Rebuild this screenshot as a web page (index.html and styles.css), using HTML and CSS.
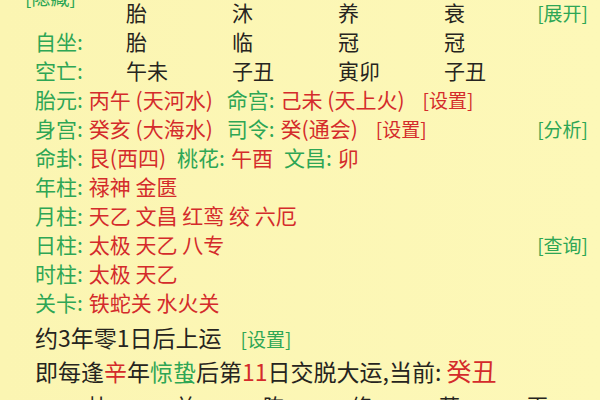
FILE: index.html
```html
<!DOCTYPE html>
<html lang="zh">
<head>
<meta charset="utf-8">
<link rel="stylesheet" href="styles.css">
</head>
<body>
<div class="page">
  <div class="hide-row"><span class="link hide-link">[隐藏]</span></div>

  <div class="grid-row">
    <span class="lbl"></span>
    <span class="cell">胎</span><span class="cell">沐</span><span class="cell">养</span><span class="cell last">衰</span>
    <span class="link right">[展开]</span>
  </div>
  <div class="grid-row">
    <span class="lbl">自坐:</span>
    <span class="cell">胎</span><span class="cell">临</span><span class="cell">冠</span><span class="cell last">冠</span>
  </div>
  <div class="grid-row">
    <span class="lbl">空亡:</span>
    <span class="cell">午未</span><span class="cell">子丑</span><span class="cell">寅卯</span><span class="cell last">子丑</span>
  </div>

  <div class="row">
    <div class="items">
      <span class="k">胎元:</span><span class="v">丙午 (天河水)</span>
      <span class="k gap">命宫:</span><span class="v">己未 (天上火)</span>
      <span class="rlink">[设置]</span>
    </div>
  </div>
  <div class="row">
    <div class="items">
      <span class="k">身宫:</span><span class="v">癸亥 (大海水)</span>
      <span class="k gap">司令:</span><span class="v">癸(通会)</span>
      <span class="rlink">[设置]</span>
    </div>
    <span class="link right">[分析]</span>
  </div>
  <div class="row">
    <div class="items">
      <span class="k">命卦:</span><span class="v">艮(西四)</span>
      <span class="k gap2">桃花:</span><span class="v">午酉</span>
      <span class="k gap2">文昌:</span><span class="v">卯</span>
    </div>
  </div>
  <div class="row">
    <div class="items"><span class="k">年柱:</span><span class="v">禄神 金匮</span></div>
  </div>
  <div class="row">
    <div class="items"><span class="k">月柱:</span><span class="v">天乙 文昌 红鸾 绞 六厄</span></div>
  </div>
  <div class="row">
    <div class="items"><span class="k">日柱:</span><span class="v">太极 天乙 八专</span></div>
    <span class="link right">[查询]</span>
  </div>
  <div class="row">
    <div class="items"><span class="k">时柱:</span><span class="v">太极 天乙</span></div>
  </div>
  <div class="row">
    <div class="items"><span class="k">关卡:</span><span class="v">铁蛇关 水火关</span></div>
  </div>

  <div class="big-row first">约3年零1日后上运<span class="link inline-link">[设置]</span></div>
  <div class="big-row second">即每逢<span class="red">辛</span>年<span class="green">惊蛰</span>后第<span class="red">11</span>日交脱大运,当前: <span class="red cur">癸丑</span></div>

  <div class="tail-row">
    <span>杜</span><span>羊</span><span>陈</span><span>修</span><span>莫</span><span>更</span>
  </div>
</div>
</body>
</html>
```

FILE: styles.css
```css
html, body {
  margin: 0;
  padding: 0;
}
body {
  width: 600px;
  height: 400px;
  overflow: hidden;
  background: linear-gradient(90deg, #fbf5b2 0%, #fdf8b8 100%);
  font-family: "Noto Sans CJK SC", "Noto Sans", sans-serif;
  color: #262420;
}
.page {
  margin-top: -14px;
  padding-left: 35px;
  padding-right: 12px;
  display: flex;
  flex-direction: column;
}
.link {
  color: #2ea655;
  font-size: 19px;
  white-space: nowrap;
}
.hide-row {
  height: 12px;
  line-height: 22px;
  overflow: visible;
}
.hide-link {
  margin-left: -10px;
}
.grid-row {
  display: flex;
  align-items: center;
  height: 29px;
  line-height: 29px;
  font-size: 21px;
  white-space: nowrap;
}
.grid-row .lbl {
  flex: none;
  width: 91px;
  color: #2ea655;
}
.cell {
  flex: none;
  width: 106px;
  color: #262420;
}
.cell.last {
  width: auto;
}
.right {
  margin-left: auto;
}
.row {
  display: flex;
  align-items: center;
  height: 29px;
  line-height: 29px;
  white-space: nowrap;
}
.items {
  display: flex;
  align-items: center;
  font-size: 21px;
}
.k {
  color: #2ea655;
  margin-right: 6px;
}
.v {
  color: #d42b2b;
}
.gap {
  margin-left: 14px;
}
.gap2 {
  margin-left: 11px;
}
.rlink {
  color: #d42b2b;
  font-size: 19px;
  margin-left: 18px;
}
.big-row {
  font-size: 23px;
  color: #262420;
  white-space: nowrap;
}
.big-row.first {
  margin-top: 3px;
  line-height: 34px;
  height: 34px;
}
.big-row.second {
  line-height: 32px;
  height: 32px;
}
.inline-link {
  margin-left: 19px;
  font-size: 19px;
}
.red {
  color: #d42b2b;
}
.green {
  color: #2ea655;
}
.cur {
  font-size: 25px;
}
.tail-row {
  display: flex;
  padding-left: 52px;
  gap: 67px;
  font-size: 21px;
  line-height: 38px;
  color: #262420;
}
```
